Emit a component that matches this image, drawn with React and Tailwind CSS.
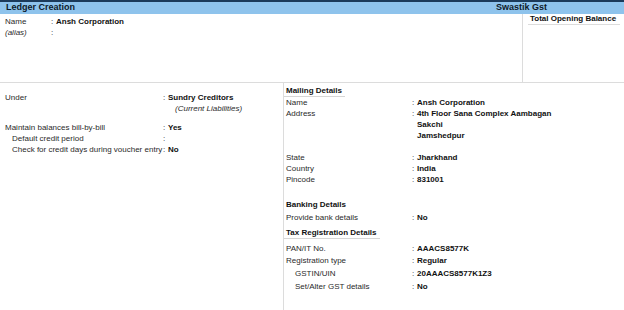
import React from "react";

const Row = ({ label, value, labelW, indent = 0, italicLabel = false, className = "" }) => (
  <div className={`flex leading-[11px] ${className}`}>
    <div
      className={`shrink-0 ${italicLabel ? "italic" : ""}`}
      style={{ width: labelW, paddingLeft: indent }}
    >
      {label}
    </div>
    <div className="w-[5px] shrink-0">:</div>
    <div className="font-bold text-[#111]">{value}</div>
  </div>
);

const Heading = ({ children, underline = false, className = "" }) => (
  <div className={`leading-[11px] ${className}`}>
    <span
      className={`inline-block font-bold text-[#111] pl-[2px] pr-[3px] ${underline ? "border-b border-[#d6d6d6]" : ""}`}
    >
      {children}
    </span>
  </div>
);

const App = () => {
  return (
    <div
      className="w-[624px] h-[310px] bg-white text-[8px] text-[#2a2a2a] overflow-hidden"
      style={{ fontFamily: '"Liberation Sans", Arial, sans-serif' }}
    >
      {/* title bar */}
      <div className="h-[2px] bg-[#1b3a5a]" />
      <div className="h-[12px] bg-[#8ec3ec] flex items-center font-bold text-[9px] text-[#0d1a2a]">
        <div className="w-[496px] pl-[6px]">Ledger Creation</div>
        <div>Swastik Gst</div>
      </div>

      {/* name section */}
      <div className="flex h-[69px] border-b border-[#dcdcdc]">
        <div className="flex-1 pl-[5px] pt-[2px]">
          <Row label="Name" value="Ansh Corporation" labelW={46} />
          <Row label="(alias)" value="" labelW={46} italicLabel />
        </div>
        <div className="w-[102px] border-l border-[#dcdcdc]">
          <div className="ml-[5px] mr-[4px] pl-[2px] leading-[10px] border-b border-[#dcdcdc] font-bold text-[#111]">
            Total Opening Balance
          </div>
        </div>
      </div>

      {/* details */}
      <div className="flex h-[227px]">
        <div className="w-[283px] pl-[5px] pt-[9px]">
          <Row label="Under" value="Sundry Creditors" labelW={158} />
          <div className="leading-[11px] pl-[170px] italic">(Current Liabilities)</div>
          <Row label="Maintain balances bill-by-bill" value="Yes" labelW={158} className="mt-[8px]" />
          <Row label="Default credit period" value="" labelW={158} indent={7} />
          <Row label="Check for credit days during voucher entry" value="No" labelW={158} indent={7} />
        </div>

        <div className="flex-1 border-l border-[#dcdcdc] pt-[2px]">
          <Heading underline>Mailing Details</Heading>
          <div className="pl-[2px]">
            <Row label="Name" value="Ansh Corporation" labelW={126} />
            <Row label="Address" value="4th Floor Sana Complex Aambagan" labelW={126} />
            <div className="leading-[11px] pl-[131px] font-bold text-[#111]">Sakchi</div>
            <div className="leading-[11px] pl-[131px] font-bold text-[#111]">Jamshedpur</div>
            <Row label="State" value="Jharkhand" labelW={126} className="mt-[11px]" />
            <Row label="Country" value="India" labelW={126} />
            <Row label="Pincode" value="831001" labelW={126} />
          </div>

          <Heading className="mt-[14px]">Banking Details</Heading>
          <div className="pl-[2px]">
            <Row label="Provide bank details" value="No" labelW={126} className="mt-[2px]" />
          </div>

          <Heading underline className="mt-[4px]">Tax Registration Details</Heading>
          <div className="pl-[2px]">
            <Row label="PAN/IT No." value="AAACS8577K" labelW={126} className="mt-[4px]" />
            <Row label="Registration type" value="Regular" labelW={126} className="mt-[1px]" />
            <Row label="GSTIN/UIN" value="20AAACS8577K1Z3" labelW={126} indent={9} className="mt-[2px]" />
            <Row label="Set/Alter GST details" value="No" labelW={126} indent={9} className="mt-[2px]" />
          </div>
        </div>
      </div>
    </div>
  );
};

export default App;
